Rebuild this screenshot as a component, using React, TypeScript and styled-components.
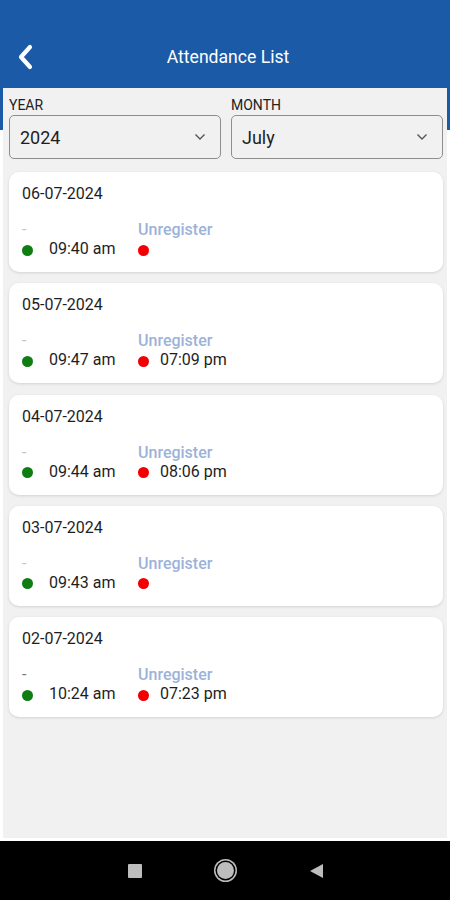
import React from 'react';
import styled, {createGlobalStyle} from 'styled-components';

const GlobalStyle = createGlobalStyle`
    html, body {
        margin: 0;
        padding: 0;
        background: #ffffff;
        font-family: Roboto, "Liberation Sans", Arial, sans-serif;
    }
`;

type Entry = {
    date: string;
    inTime: string;
    outTime: string;
    darkDash?: boolean;
};

const entries: Entry[] = [
    {date: "06-07-2024", inTime: "09:40 am", outTime: ""},
    {date: "05-07-2024", inTime: "09:47 am", outTime: "07:09 pm"},
    {date: "04-07-2024", inTime: "09:44 am", outTime: "08:06 pm"},
    {date: "03-07-2024", inTime: "09:43 am", outTime: ""},
    {date: "02-07-2024", inTime: "10:24 am", outTime: "07:23 pm", darkDash: true},
];

const Screen = styled.div`
    width: 450px;
    height: 900px;
    display: flex;
    flex-direction: column;
    overflow: hidden;
`;

const Header = styled.header`
    height: 88px;
    background: #1b5aa7;
    padding-top: 40px;
    box-sizing: border-box;
`;

const TitleRow = styled.div`
    height: 34px;
    display: grid;
    grid-template-columns: 60px 1fr 60px;
    align-items: center;
`;

const BackButton = styled.button`
    border: none;
    background: transparent;
    padding: 0 0 0 16px;
    display: flex;
    align-items: center;
    height: 100%;
`;

const Title = styled.h1`
    margin: 0;
    text-align: center;
    color: #ffffff;
    font-size: 17.6px;
    font-weight: 400;
    padding-left: 6px;
`;

const Body = styled.main`
    flex: 1;
    display: flex;
    padding: 0 3px 3px;
    background: linear-gradient(#1b5aa7 0 42px, #ffffff 42px);
`;

const Panel = styled.div`
    flex: 1;
    background: #f1f1f1;
    padding: 9px 4px 0 6px;
    display: flex;
    flex-direction: column;
`;

const Filters = styled.div`
    display: grid;
    grid-template-columns: 1fr 1fr;
    gap: 10px;
    margin-bottom: 13px;
`;

const Field = styled.div`
    display: flex;
    flex-direction: column;
`;

const FieldLabel = styled.span`
    font-size: 14px;
    line-height: 16px;
    color: #222222;
    margin-bottom: 2px;
`;

const SelectBox = styled.div`
    height: 44px;
    box-sizing: border-box;
    border: 1px solid #8e8e8e;
    border-radius: 5px;
    display: flex;
    align-items: center;
    justify-content: space-between;
    padding: 0 14px 0 10px;
    font-size: 18px;
    color: #1e1e1e;
`;

const List = styled.div`
    display: flex;
    flex-direction: column;
    gap: 11.25px;
`;

const Card = styled.div`
    background: #ffffff;
    border-radius: 10px;
    box-shadow: 0 1px 3px rgba(0, 0, 0, 0.13);
    padding: 13px 13px 15px;
    height: 100px;
    box-sizing: border-box;
`;

const DateText = styled.div`
    font-size: 16px;
    line-height: 18px;
    color: #1e1e1e;
`;

const Columns = styled.div`
    display: grid;
    grid-template-columns: 116px 1fr;
    margin-top: 17px;
`;

const Column = styled.div`
    display: flex;
    flex-direction: column;
`;

const Caption = styled.span<{ $tone: "dash" | "darkDash" | "label" }>`
    font-size: 16px;
    line-height: 19px;
    height: 19px;
    font-weight: ${p => p.$tone === "label" ? 500 : 400};
    color: ${p => p.$tone === "label" ? "#9db2d9" : p.$tone === "darkDash" ? "#777777" : "#c4c4c4"};
`;

const TimeRow = styled.div<{ $gap: number }>`
    display: flex;
    align-items: center;
    gap: ${p => p.$gap}px;
    height: 19px;
    font-size: 16px;
    color: #1e1e1e;
`;

const Dot = styled.span<{ $color: string }>`
    width: 11px;
    height: 11px;
    border-radius: 50%;
    background: ${p => p.$color};
    margin-top: 3px;
    flex-shrink: 0;
`;

const NavBar = styled.nav`
    height: 59px;
    background: #000000;
    display: flex;
    align-items: center;
    justify-content: center;
    gap: 75px;
    padding-left: 2px;
`;

const NavSquare = styled.span`
    width: 14px;
    height: 14px;
    background: #bdbdbd;
    border-radius: 1px;
`;

const NavHome = styled.span`
    width: 17px;
    height: 17px;
    border-radius: 50%;
    background: #bdbdbd;
    box-shadow: 0 0 0 1.5px #000000, 0 0 0 3px #bdbdbd;
`;

const Chevron = () => (
    <svg width="12" height="8" viewBox="0 0 12 8">
        <polyline points="1.5,1.5 6,6 10.5,1.5" fill="none" stroke="#555555" strokeWidth="1.4"/>
    </svg>
);

const App: React.FC = () => {
    return (
        <Screen>
            <GlobalStyle/>
            <Header>
                <TitleRow>
                    <BackButton>
                        <svg width="20" height="26" viewBox="0 0 20 26">
                            <polyline points="14,3 5,13 14,23" fill="none" stroke="#ffffff" strokeWidth="4.2"
                                      strokeLinecap="round" strokeLinejoin="round"/>
                        </svg>
                    </BackButton>
                    <Title>Attendance List</Title>
                    <span/>
                </TitleRow>
            </Header>
            <Body>
                <Panel>
                    <Filters>
                        <Field>
                            <FieldLabel>YEAR</FieldLabel>
                            <SelectBox>2024<Chevron/></SelectBox>
                        </Field>
                        <Field>
                            <FieldLabel>MONTH</FieldLabel>
                            <SelectBox>July<Chevron/></SelectBox>
                        </Field>
                    </Filters>
                    <List>
                        {entries.map(e => (
                            <Card key={e.date}>
                                <DateText>{e.date}</DateText>
                                <Columns>
                                    <Column>
                                        <Caption $tone={e.darkDash ? "darkDash" : "dash"}>-</Caption>
                                        <TimeRow $gap={16}>
                                            <Dot $color="#0f7d12"/>
                                            {e.inTime}
                                        </TimeRow>
                                    </Column>
                                    <Column>
                                        <Caption $tone="label">Unregister</Caption>
                                        <TimeRow $gap={11}>
                                            <Dot $color="#f20000"/>
                                            {e.outTime}
                                        </TimeRow>
                                    </Column>
                                </Columns>
                            </Card>
                        ))}
                    </List>
                </Panel>
            </Body>
            <NavBar>
                <NavSquare/>
                <NavHome/>
                <svg width="15" height="16" viewBox="0 0 15 16">
                    <polygon points="14,1 14,15 1,8" fill="#bdbdbd"/>
                </svg>
            </NavBar>
        </Screen>
    );
};

export default App;
